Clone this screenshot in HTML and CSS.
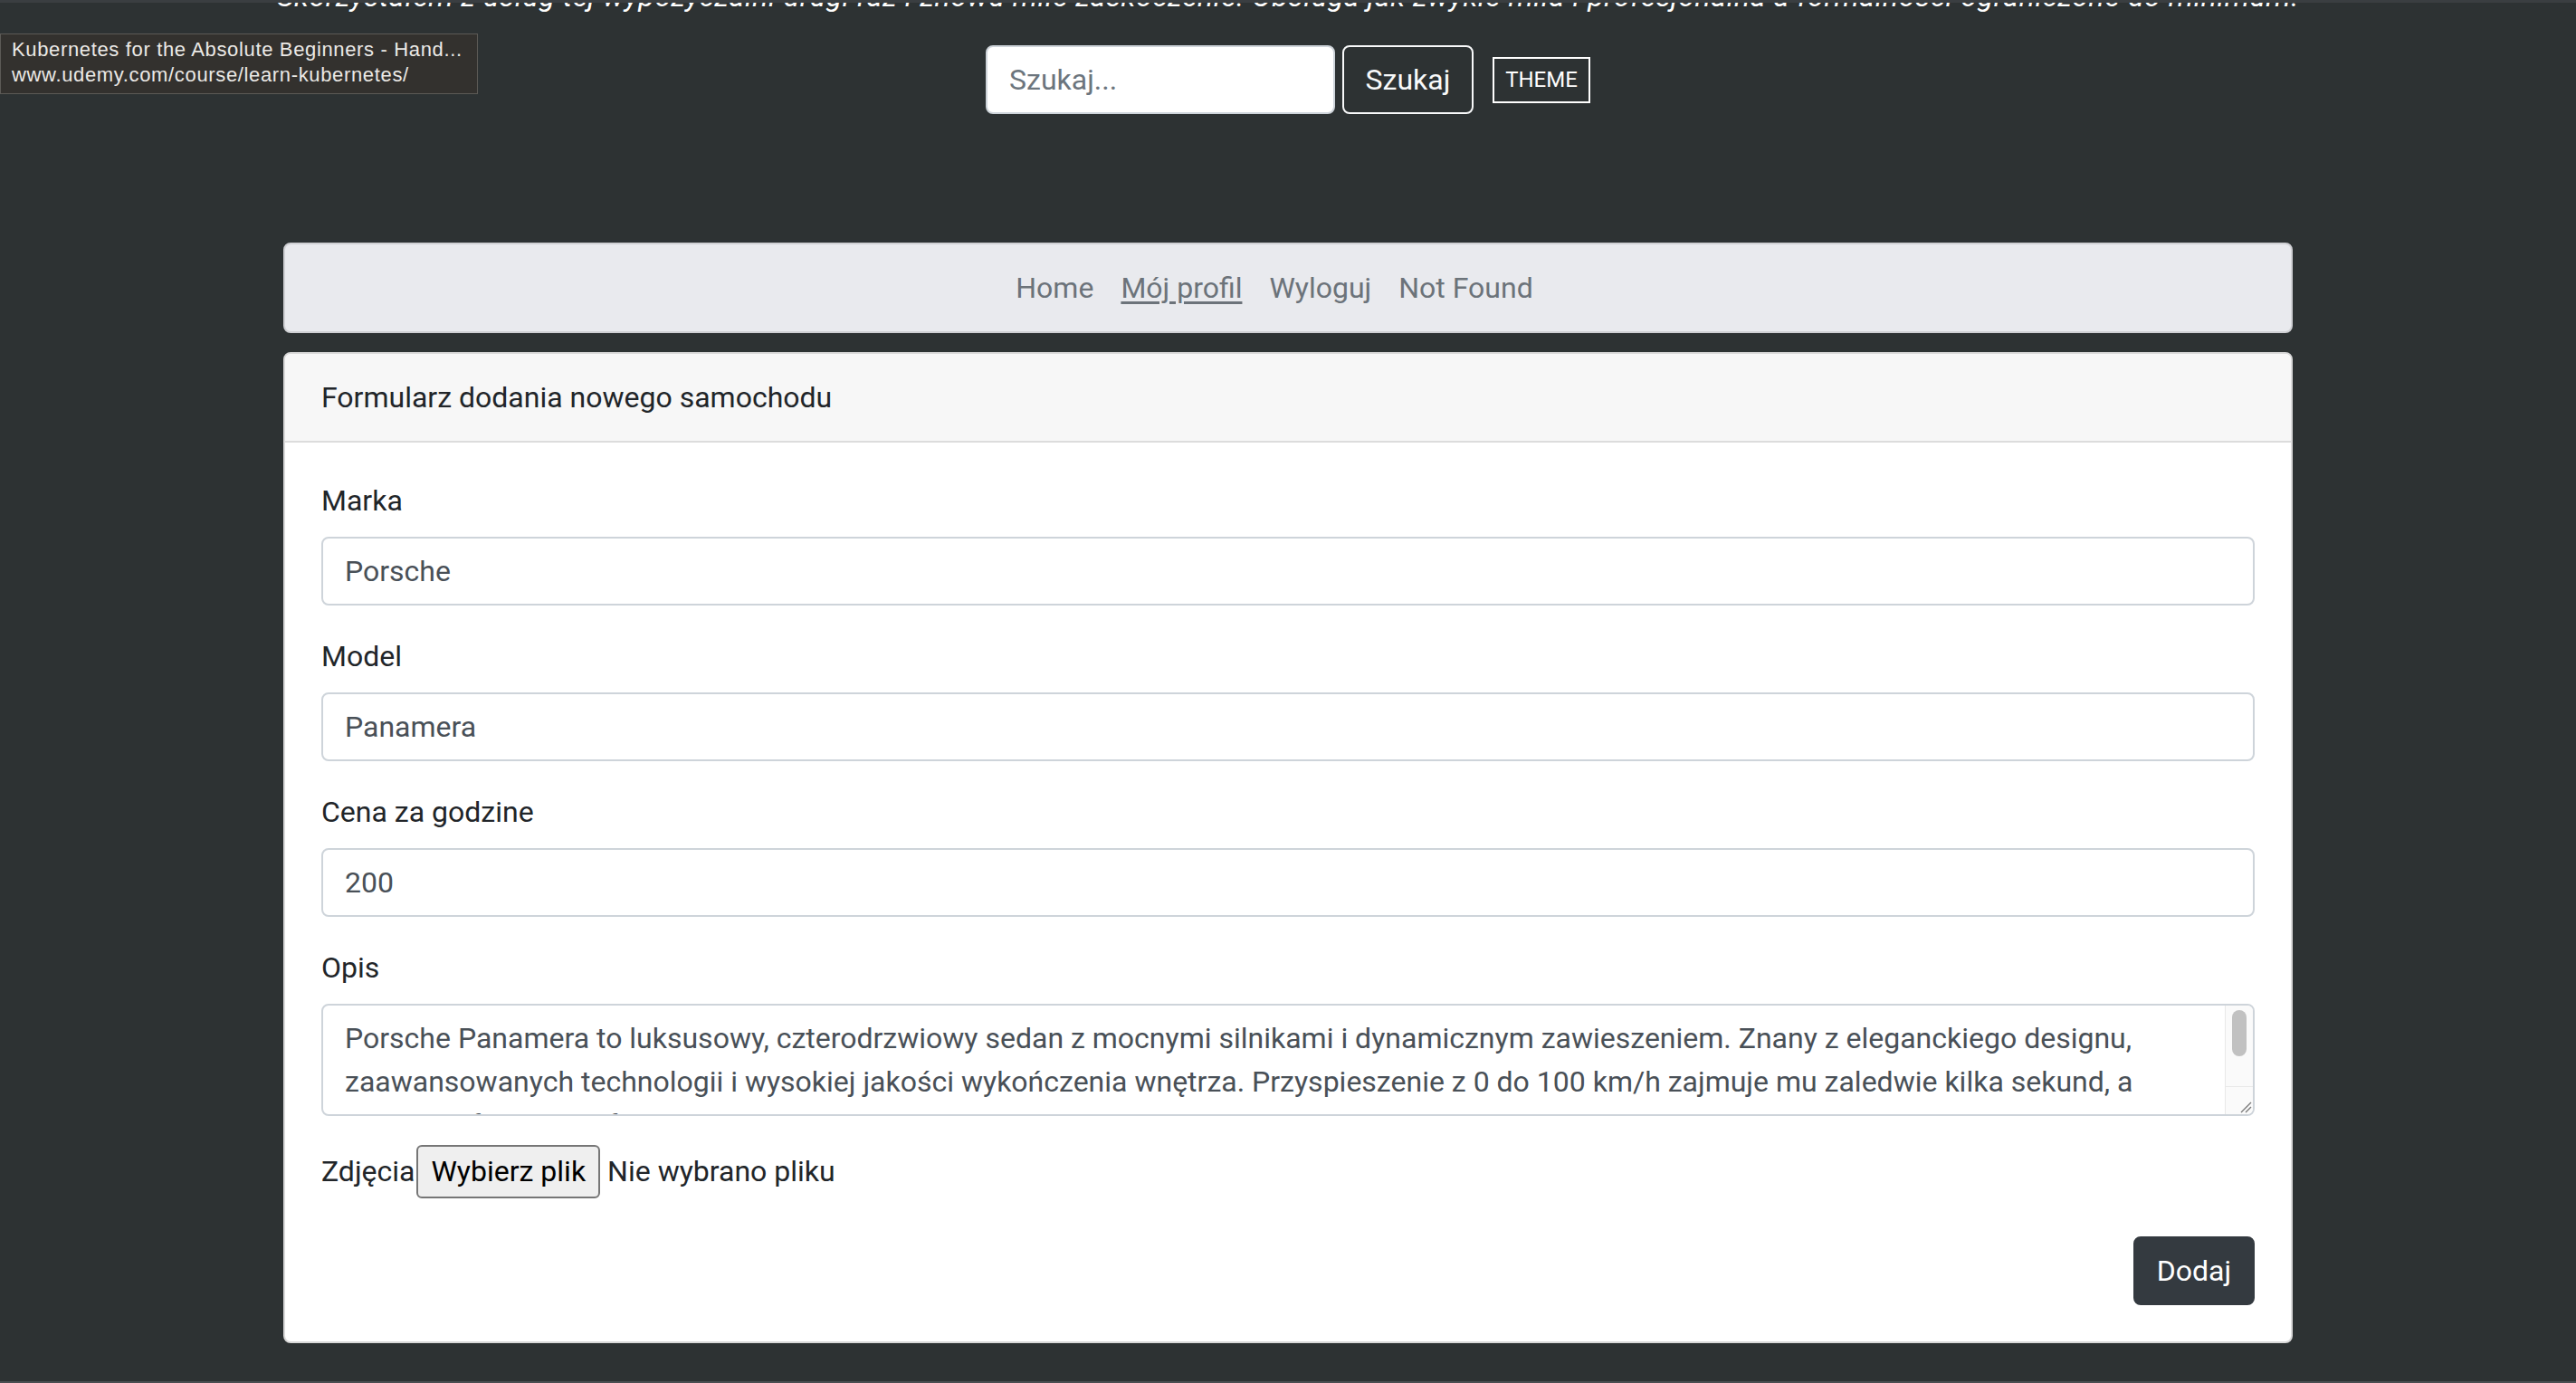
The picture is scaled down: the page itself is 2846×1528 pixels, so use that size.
FILE: index.html
```html
<!DOCTYPE html>
<html lang="pl">
<head>
<meta charset="utf-8">
<title>Formularz dodania nowego samochodu</title>
<link rel="stylesheet" href="styles.css">
</head>
<body>
<div class="screen">
  <header class="masthead">
    <p class="quote">Skorzystałem z usług tej wypożyczalni drugi raz i znowu mile zaskoczenie. Obsługa jak zwykle miła i profesjonalna a formalności ograniczone do minimum.</p>
    <form class="search">
      <input class="search-input" type="text" placeholder="Szukaj...">
      <button class="btn-search" type="button">Szukaj</button>
      <button class="btn-theme" type="button">THEME</button>
    </form>
  </header>

  <main class="container">
    <nav class="navbar">
      <ul class="nav">
        <li><a class="nav-link" href="#">Home</a></li>
        <li><a class="nav-link hover" href="#">Mój profil</a></li>
        <li><a class="nav-link" href="#">Wyloguj</a></li>
        <li><a class="nav-link" href="#">Not Found</a></li>
      </ul>
    </nav>

    <section class="card">
      <div class="card-header">Formularz dodania nowego samochodu</div>
      <form class="card-body">
        <div class="group">
          <label class="label">Marka</label>
          <input class="control" type="text" value="Porsche">
        </div>
        <div class="group">
          <label class="label">Model</label>
          <input class="control" type="text" value="Panamera">
        </div>
        <div class="group">
          <label class="label">Cena za godzine</label>
          <input class="control" type="text" value="200">
        </div>
        <div class="group">
          <label class="label">Opis</label>
          <div class="area-wrap">
            <textarea class="area" rows="2">Porsche Panamera to luksusowy, czterodrzwiowy sedan z mocnymi silnikami i dynamicznym zawieszeniem. Znany z eleganckiego designu, zaawansowanych technologii i wysokiej jakości wykończenia wnętrza. Przyspieszenie z 0 do 100 km/h zajmuje mu zaledwie kilka sekund, a wnętrze oferuje komfort dla czterech osób. To samochód, który łączy sportowe osiągi z codzienną praktycznością i wygodą podróżowania na długich trasach.</textarea>
            <div class="scrollbar">
              <div class="scroll-track"><div class="scroll-thumb"></div></div>
              <div class="scroll-corner">
                <svg class="grip" width="16" height="16" viewBox="0 0 16 16"><path d="M15 4 L4 15 M15 9 L9 15" stroke="#7a7a7a" stroke-width="1.4" fill="none"/></svg>
              </div>
            </div>
          </div>
        </div>
        <div class="file-row">
          <span class="file-label">Zdjęcia</span>
          <button class="file-btn" type="button">Wybierz plik</button>
          <span class="file-name">Nie wybrano pliku</span>
        </div>
        <div class="actions">
          <button class="btn-dark" type="button">Dodaj</button>
        </div>
      </form>
    </section>
  </main>

  <div class="bottom-edge"></div>

  <div class="tooltip">
    <div>Kubernetes for the Absolute Beginners - Hand...</div>
    <div>www.udemy.com/course/learn-kubernetes/</div>
  </div>
</div>
</body>
</html>
```

FILE: styles.css
```css
html, body {
  margin: 0;
  padding: 0;
  height: 100%;
}

body {
  background: #2d3233;
  font-family: Roboto, "Noto Sans", "Liberation Sans", sans-serif;
  font-size: 32px;
  line-height: 48px;
  color: #212529;
  overflow: hidden;
}

.screen {
  position: relative;
  min-height: 100%;
  display: flex;
  flex-direction: column;
}

/* ---------- top area ---------- */
.masthead {
  border-top: 3px solid #3a3e41;
  overflow: hidden;
}

.quote {
  margin: -31px 0 0;
  height: 48px;
  text-align: center;
  font-style: italic;
  color: #ffffff;
  white-space: nowrap;
  letter-spacing: 0.62px;
}

.search {
  margin: 30px 0 0;
  display: flex;
  justify-content: center;
  align-items: center;
}

.search-input {
  box-sizing: border-box;
  width: 386px;
  height: 76px;
  padding: 0 24px;
  border: 2px solid #ced4da;
  border-radius: 8px;
  background: #fff;
  font-family: inherit;
  font-size: 32px;
  color: #495057;
  outline: none;
}

.search-input::placeholder {
  color: #6c757d;
}

.btn-search {
  box-sizing: border-box;
  margin-left: 8px;
  width: 145px;
  height: 76px;
  border: 2px solid #f8f9fa;
  border-radius: 8px;
  background: transparent;
  color: #f8f9fa;
  font-family: inherit;
  font-size: 32px;
  padding: 0;
}

.btn-theme {
  box-sizing: border-box;
  margin-left: 21px;
  width: 108px;
  height: 51px;
  border: 2px solid #ffffff;
  border-radius: 0;
  background: transparent;
  color: #ffffff;
  font-family: inherit;
  font-size: 24px;
  padding: 0;
}

/* ---------- container ---------- */
.container {
  width: 2220px;
  margin: 142px auto 0;
  flex: 1;
}

.navbar {
  box-sizing: border-box;
  height: 100px;
  background: #e9eaee;
  border: 2px solid #cfd0d4;
  border-radius: 8px;
  display: flex;
  align-items: center;
  justify-content: center;
}

.nav {
  list-style: none;
  margin: 0;
  padding: 0 30px 0 0;
  display: flex;
}

.nav-link {
  display: block;
  padding: 0 15px;
  color: #6c737a;
  text-decoration: none;
}

.nav-link.hover {
  text-decoration: underline;
  text-underline-offset: 4px;
  text-decoration-thickness: 3px;
}

/* ---------- card ---------- */
.card {
  margin-top: 21px;
  background: #fff;
  border: 2px solid #d9d9d9;
  border-radius: 8px;
  overflow: hidden;
}

.card-header {
  padding: 24px 40px;
  background: #f7f7f7;
  border-bottom: 2px solid #dcdcdc;
}

.card-body {
  padding: 40px;
  margin: 0;
}

.group {
  margin-bottom: 32px;
}

.label {
  display: block;
  margin-bottom: 16px;
}

.control {
  display: block;
  box-sizing: border-box;
  width: 100%;
  height: 76px;
  padding: 12px 24px;
  border: 2px solid #ced4da;
  border-radius: 8px;
  background: #fff;
  font-family: inherit;
  font-size: 32px;
  line-height: 48px;
  color: #495057;
  outline: none;
}

/* textarea with its scrollbar */
.area-wrap {
  box-sizing: border-box;
  height: 124px;
  display: flex;
  border: 2px solid #ced4da;
  border-radius: 8px;
  background: #fff;
  overflow: hidden;
}

.area {
  flex: 1;
  box-sizing: border-box;
  height: 120px;
  margin: 0;
  padding: 12px 24px;
  border: none;
  outline: none;
  resize: none;
  overflow: hidden;
  background: transparent;
  font-family: inherit;
  font-size: 32px;
  line-height: 48px;
  color: #495057;
}

.scrollbar {
  width: 30px;
  display: flex;
  flex-direction: column;
  background: #fafafa;
  border-left: 1px solid #e8e8e8;
}

.scroll-track {
  flex: 1;
  padding: 5px 7px 0;
}

.scroll-thumb {
  height: 51px;
  border-radius: 8px;
  background: #c1c1c1;
}

.scroll-corner {
  height: 30px;
  border-top: 1px solid #e8e8e8;
  display: flex;
  justify-content: flex-end;
  align-items: flex-end;
}

.grip {
  display: block;
  margin: 0 1px 1px 0;
}

/* ---------- file row ---------- */
.file-row {
  margin-top: -1px;
  height: 60px;
  display: flex;
  align-items: center;
}

.file-btn {
  box-sizing: border-box;
  height: 59px;
  margin-left: 2px;
  padding: 0 14px;
  background: #efefef;
  border: 2px solid #767676;
  border-radius: 6px;
  color: #000;
  font-family: inherit;
  font-size: 32px;
}

.file-name {
  margin-left: 8px;
}

.actions {
  margin-top: 42px;
  display: flex;
  justify-content: flex-end;
}

.btn-dark {
  box-sizing: border-box;
  width: 134px;
  height: 76px;
  padding: 0;
  background: #343a40;
  border: 2px solid #343a40;
  border-radius: 8px;
  color: #fff;
  font-family: inherit;
  font-size: 32px;
}

.bottom-edge {
  height: 2px;
  background: #4a4e51;
}

/* ---------- browser link tooltip ---------- */
.tooltip {
  position: absolute;
  left: 0;
  top: 37px;
  box-sizing: border-box;
  width: 528px;
  height: 67px;
  padding: 3px 12px 0;
  background: #33312e;
  border: 1px solid #5c5a56;
  font-family: "Liberation Sans", Arial, sans-serif;
  font-size: 22px;
  line-height: 28px;
  letter-spacing: 0.65px;
  color: #ebe9e6;
  white-space: nowrap;
  overflow: hidden;
}
```
